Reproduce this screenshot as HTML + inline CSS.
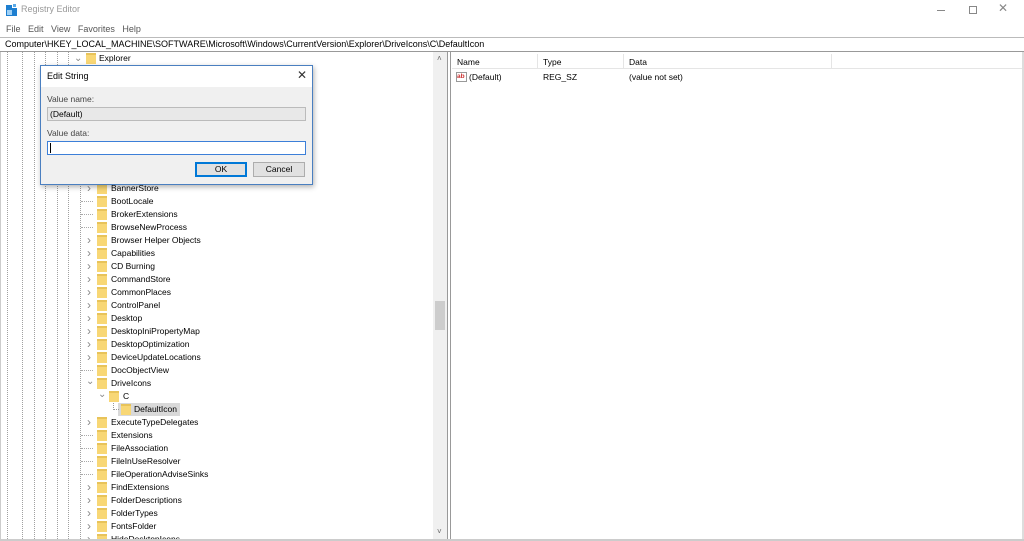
<!DOCTYPE html>
<html><head><style>
*{margin:0;padding:0;box-sizing:border-box}
html,body{width:1024px;height:541px;overflow:hidden}
body{background:#fff;font-family:"Liberation Sans",sans-serif;font-size:8.5px;color:#000;position:relative}
.a{position:absolute}
.row{position:absolute;height:13px;line-height:13px;white-space:nowrap}
.fold{position:absolute;width:10px;height:11px;background:#f8d775;border-top:2px solid #e8c35a}
.dl{position:absolute;width:0;border-left:1px dotted #a0a0a0;top:52px;height:487px}
.exp{position:absolute;color:#888;font-size:10px;line-height:13px}
.btn{position:absolute;height:15px;border:1px solid #adadad;background:#e1e1e1;text-align:center;line-height:13px;font-size:8.5px}
#clip{position:absolute;left:0;top:52px;width:433px;height:487px;overflow:hidden}
</style></head><body>
<div class="a" style="left:6px;top:5px;width:11px;height:11px;background:#1e7fd0"></div>
<div class="a" style="left:7px;top:10px;width:5px;height:5px;background:#9fd0f5"></div>
<div class="a" style="left:12px;top:3px;width:5px;height:5px;background:#5aa9e6;border:1px solid #fff"></div>
<div class="a" style="left:21px;top:4px;color:#999;font-size:9px">Registry Editor</div>
<div class="a" style="left:937px;top:10px;width:8px;height:1px;background:#888"></div>
<div class="a" style="left:969px;top:6px;width:8px;height:8px;border:1px solid #888"></div>
<div class="a" style="left:998px;top:1px;color:#888;font-size:12px">✕</div>
<div class="a" style="left:6px;top:24px;color:#555;font-size:9px">File&nbsp;&nbsp;&nbsp;Edit&nbsp;&nbsp;&nbsp;View&nbsp;&nbsp;&nbsp;Favorites&nbsp;&nbsp;&nbsp;Help</div>
<div class="a" style="left:0;top:37px;width:1024px;height:15px;border-top:1px solid #bbb;border-bottom:1px solid #999;background:#fff"></div>
<div class="a" style="left:5px;top:39px;font-size:9px">Computer\HKEY_LOCAL_MACHINE\SOFTWARE\Microsoft\Windows\CurrentVersion\Explorer\DriveIcons\C\DefaultIcon</div>
<div class="dl" style="left:7px"></div><div class="dl" style="left:22px"></div><div class="dl" style="left:34px"></div><div class="dl" style="left:45px"></div><div class="dl" style="left:57px"></div><div class="dl" style="left:68px"></div>
<div class="dl" style="left:80px;top:66px;height:473px"></div>
<div class="a" style="left:0;top:52px;width:1px;height:489px;background:#ccc"></div>
<div class="exp" style="left:74px;top:52px">⌄</div>
<div class="fold" style="left:86px;top:53px"></div>
<div class="row" style="left:99px;top:52px">Explorer</div>
<div id="clip"><div id="tree"></div></div>
<div class="a" style="left:433px;top:52px;width:14px;height:487px;background:#f0f0f0"></div>
<div class="a" style="left:435px;top:301px;width:10px;height:29px;background:#cdcdcd"></div>
<div class="a" style="left:437px;top:54px;color:#666;font-size:8px">˄</div>
<div class="a" style="left:437px;top:527px;color:#666;font-size:8px">˅</div>
<div class="a" style="left:447px;top:52px;width:1px;height:489px;background:#999"></div>
<div class="a" style="left:450px;top:52px;width:1px;height:489px;background:#999"></div>
<div class="a" style="left:452px;top:52px;width:572px;height:17px;border-bottom:1px solid #e5e5e5"></div>
<div class="a" style="left:537px;top:54px;width:1px;height:15px;background:#e5e5e5"></div>
<div class="a" style="left:623px;top:54px;width:1px;height:15px;background:#e5e5e5"></div>
<div class="a" style="left:831px;top:54px;width:1px;height:15px;background:#e5e5e5"></div>
<div class="a" style="left:457px;top:57px">Name</div>
<div class="a" style="left:543px;top:57px">Type</div>
<div class="a" style="left:629px;top:57px">Data</div>
<div class="a" style="left:456px;top:72px;width:11px;height:10px;border:1px solid #999;background:#fff;color:#c33;font-size:6.5px;line-height:8px;font-weight:bold">ab</div>
<div class="a" style="left:469px;top:72px">(Default)</div>
<div class="a" style="left:543px;top:72px">REG_SZ</div>
<div class="a" style="left:629px;top:72px">(value not set)</div>
<div class="a" style="left:1022px;top:52px;width:2px;height:489px;background:#ddd"></div>
<div class="a" style="left:0;top:539px;width:1024px;height:2px;background:#ccc"></div>
<div class="a" style="left:40px;top:65px;width:273px;height:120px;border:1px solid #4a7fc0;background:#f0f0f0;box-shadow:1px 2px 5px rgba(0,0,0,.3)">
 <div class="a" style="left:0;top:0;width:271px;height:21px;background:#fff"></div>
 <div class="a" style="left:6px;top:5px;font-size:9px">Edit String</div>
 <div class="a" style="left:256px;top:2px;font-size:12px;color:#333">✕</div>
 <div class="a" style="left:6px;top:28px;color:#444">Value name:</div>
 <div class="a" style="left:6px;top:41px;width:259px;height:14px;border:1px solid #bbb;background:#e8e8e8;padding:1px 2px">(Default)</div>
 <div class="a" style="left:6px;top:62px;color:#444">Value data:</div>
 <div class="a" style="left:6px;top:75px;width:259px;height:14px;border:1px solid #3c7fd8;background:#fff"></div>
 <div class="a" style="left:9px;top:77px;width:1px;height:10px;background:#000"></div>
 <div class="btn" style="left:154px;top:96px;width:52px;border:1px solid #0078d7;box-shadow:inset 0 0 0 1px #0078d7">OK</div>
 <div class="btn" style="left:212px;top:96px;width:52px">Cancel</div>
</div>
<script>
var rows=[["BannerStore",1],["BootLocale",0],["BrokerExtensions",0],["BrowseNewProcess",0],["Browser Helper Objects",1],["Capabilities",1],["CD Burning",1],["CommandStore",1],["CommonPlaces",1],["ControlPanel",1],["Desktop",1],["DesktopIniPropertyMap",1],["DesktopOptimization",1],["DeviceUpdateLocations",1],["DocObjectView",0],["DriveIcons",2],["C",3],["DefaultIcon",4],["ExecuteTypeDelegates",1],["Extensions",0],["FileAssociation",0],["FileInUseResolver",0],["FileOperationAdviseSinks",0],["FindExtensions",1],["FolderDescriptions",1],["FolderTypes",1],["FontsFolder",1],["HideDesktopIcons",1]];
var h="";rows.forEach(function(r,i){var y=182-52+i*13;var t=r[1];var fx=97,tx=111;
if(t==3){fx=109;tx=123;h+='<div class="exp" style="left:98px;top:'+(y-2)+'px">⌄</div>';}
else if(t==4){fx=121;tx=134;h+='<div class="a" style="left:118px;top:'+y+'px;width:62px;height:13px;background:#d9d9d9"></div><div class="a" style="left:113px;top:'+y+'px;width:0;height:7px;border-left:1px dotted #999"></div><div class="a" style="left:113px;top:'+(y+6)+'px;width:6px;border-top:1px dotted #999"></div>';}
else if(t==2){h+='<div class="exp" style="left:86px;top:'+(y-2)+'px">⌄</div>';}
else if(t==1){h+='<div class="exp" style="left:87px;top:'+y+'px;font-size:12px">›</div>';}
else{h+='<div class="a" style="left:81px;top:'+(y+6)+'px;width:12px;border-top:1px dotted #aaa"></div>';}
h+='<div class="fold" style="left:'+fx+'px;top:'+(y+1)+'px"></div><div class="row" style="left:'+tx+'px;top:'+y+'px">'+r[0]+'</div>';});
document.getElementById("tree").innerHTML=h;
</script>
</body></html>
